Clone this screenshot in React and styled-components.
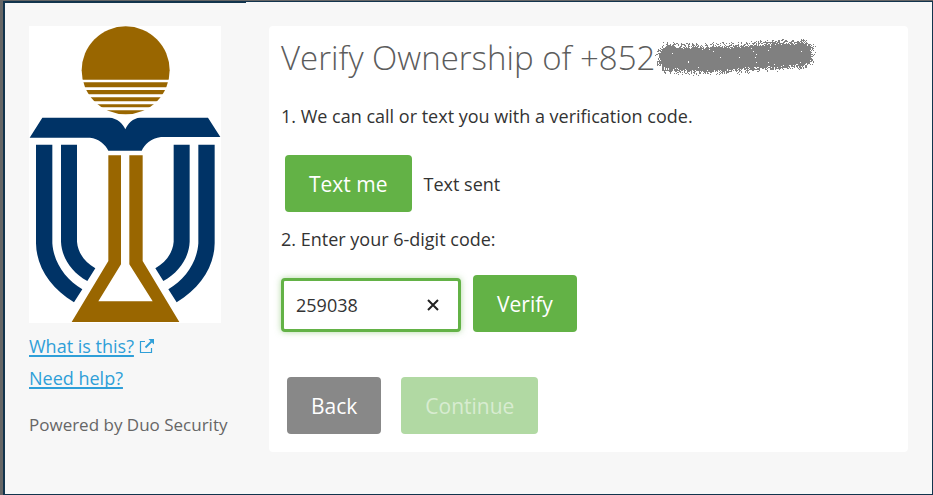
import React, { useState } from 'react'
import styled, { createGlobalStyle } from 'styled-components'

const GlobalStyle = createGlobalStyle`
    * {
        box-sizing: border-box;
    }

    body {
        margin: 0;
        background: #666666;
        color: #333333;
        font-family: "Open Sans", "Noto Sans", sans-serif;
        font-size: 18px;
        line-height: 24px;
    }
`

const Frame = styled.div`
    display: flex;
    flex-direction: column;
    min-height: calc(100vh - 1px);
    margin: 1px 0 0 3px;
    border: 1px solid #12344d;
    border-left-width: 2px;
    background: #f7f7f7;
`

const Progress = styled.div`
    width: 26%;
    height: 1px;
    background: #12344d;
`

const Layout = styled.div`
    display: flex;
    align-items: flex-start;
    gap: 48px;
    padding: 23px 24px;
`

const Sidebar = styled.aside`
    flex: 0 0 192px;
    min-width: 0;
`

const Logo = styled.svg`
    display: block;
    width: 100%;
    background: #ffffff;
`

const LinkList = styled.nav`
    display: flex;
    flex-direction: column;
    align-items: flex-start;
    margin: 7px 0 19px;
    line-height: 32px;
`

const HelpLink = styled.a`
    display: inline-flex;
    align-items: center;
    gap: 5px;
    color: #2f9fd8;
    text-decoration: none;

    span {
        text-decoration: underline 2px;
        text-underline-offset: 2px;
        text-decoration-skip-ink: none;
    }
`

const Powered = styled.p`
    margin: 0;
    color: #666666;
    font-size: 17px;
    white-space: nowrap;
`

const Card = styled.main`
    flex: 1;
    min-width: 0;
    padding: 12px 12px 18px;
    border-radius: 4px;
    background: #ffffff;
`

const Title = styled.h1`
    display: flex;
    align-items: center;
    margin: 0 0 26px;
    color: #5c5c5c;
    font-size: 33px;
    font-weight: 350;
    line-height: 40px;
    white-space: nowrap;
`

const Step = styled.p`
    margin: 0;
`

const Row = styled.div`
    display: flex;
    align-items: ${props => props.$align || 'center'};
    gap: ${props => props.$gap || '12px'};
    margin-top: ${props => props.$top};
    padding-left: ${props => props.$indent || '0'};
`

const Button = styled.button`
    height: 57px;
    padding: 0 24px;
    border: 0;
    border-radius: 4px;
    background: ${props => (props.$secondary ? '#888888' : '#63b246')};
    color: #ffffff;
    font: inherit;
    font-size: 21px;
    cursor: pointer;

    &:disabled {
        background: #b1d9a3;
        color: #d8ecd1;
        cursor: default;
    }
`

const CodeField = styled.div`
    display: flex;
    align-items: center;
    width: 180px;
    height: 54px;
    padding: 0 17px 0 12px;
    border: 3px solid #63b246;
    border-radius: 4px;
    background: #ffffff;
    box-shadow: 0 0 6px rgba(99, 178, 70, 0.5);
`

const CodeInput = styled.input`
    flex: 1;
    min-width: 0;
    padding: 0;
    border: 0;
    outline: 0;
    background: none;
    color: #333333;
    font: inherit;
`

const ClearButton = styled.button`
    display: flex;
    padding: 0;
    border: 0;
    background: none;
    color: #222222;
    cursor: pointer;
`

const NAVY = '#003366'
const GOLD = '#996600'

const Crest = () => (
    <Logo viewBox="0 0 576 891" role="img" aria-label="University crest">
        <circle cx="290" cy="133" r="132" fill={GOLD} />
        <path
            d="M150 161H430V169H150Z M150 184H430V192H150Z M150 205H430V214H150Z M150 226H430V235H150Z M150 244H430V253H150Z"
            fill="#ffffff"
        />
        <path
            d="M40 275H241C264 276 282 293 289 310C296 293 312 276 333 275H537L574 333H396C366 336 346 356 338 374H238C230 356 208 337 183 335H2Z"
            fill={NAVY}
        />
        <path id="pages" d="M21 356H70V652C74 710 110 760 160 790L135 829C64 786 22 722 21 652Z M96 356H144V647C147 682 168 709 199 727L175 765C126 738 98 694 96 647Z" fill={NAVY} />
        <use href="#pages" transform="translate(578 0) scale(-1 1)" />
        <path
            d="M238 388H276V715L208 826H371L301 715V388H341V705L451 888H128L238 705Z"
            fill={GOLD}
        />
    </Logo>
)

const ExternalIcon = () => (
    <svg width="15" height="15" viewBox="0 0 15 15" fill="none" stroke="currentColor" aria-hidden="true">
        <path d="M6 2.5H1.5V13.5H12.5V9" strokeWidth="1.2" />
        <path d="M6.5 8.5L12.5 2.5" strokeWidth="1.8" />
        <path d="M9.5 0H15V5.5Z" fill="currentColor" stroke="none" />
    </svg>
)

//spray the cells of the brush stroke, thinning out towards the edge
const sprayPath = (width, height) => {
    let seed = 7
    const random = () => {
        seed = (seed * 16807) % 2147483647
        return seed / 2147483647
    }
    let d = ''
    for (let x = 0; x < width; x++) {
        const t = x / width
        const middle = 18 + 2 * Math.sin(t * 5) - 2 * t * t
        const end = Math.min(x, width - 1 - x)
        const half = 17 * Math.sqrt(Math.min(1, (end + 3) / 14)) + 2 * (random() - 0.5)
        for (let y = 0; y < height; y++) {
            const depth = Math.min(half - Math.abs(y - middle), end + 1)
            const chance = depth > 7 ? 0.993 : Math.pow(Math.max(depth, 0) / 7, 1.3)
            if (random() < chance) {
                d += `M${x} ${y}h1v1h-1z`
            }
        }
    }
    return d
}

const stroke = sprayPath(161, 38)

const Redaction = () => (
    <svg width="161" height="38" viewBox="0 0 161 38" shapeRendering="crispEdges" role="img" aria-label="Hidden digits">
        <path d={stroke} fill="#808080" />
    </svg>
)

//two step phone verification: send the code, then check it
const App = () => {
    const [code, setCode] = useState('259038')

    return (
        <>
            <GlobalStyle />
            <Frame>
                <Progress />
                <Layout>
                    <Sidebar>
                        <Crest />
                        <LinkList>
                            <HelpLink href="#what">
                                <span>What is this?</span>
                                <ExternalIcon />
                            </HelpLink>
                            <HelpLink href="#help">
                                <span>Need help?</span>
                            </HelpLink>
                        </LinkList>
                        <Powered>Powered by Duo Security</Powered>
                    </Sidebar>
                    <Card>
                        <Title>
                            Verify Ownership of +852
                            <Redaction />
                        </Title>
                        <Step>1. We can call or text you with a verification code.</Step>
                        <Row $top="27px" $indent="4px">
                            <Button type="button">Text me</Button>
                            <span>Text sent</span>
                        </Row>
                        <Row $top="15px">
                            <label htmlFor="code">2. Enter your 6-digit code:</label>
                        </Row>
                        <Row $top="24px" $align="flex-end">
                            <CodeField>
                                <CodeInput
                                    id="code"
                                    type="text"
                                    inputMode="numeric"
                                    value={code}
                                    onChange={event => setCode(event.target.value)}
                                />
                                <ClearButton type="button" aria-label="Clear" onClick={() => setCode('')}>
                                    <svg width="16" height="16" viewBox="0 0 16 16" stroke="currentColor" strokeWidth="2">
                                        <path d="M3 3L13 13M13 3L3 13" />
                                    </svg>
                                </ClearButton>
                            </CodeField>
                            <Button type="button">Verify</Button>
                        </Row>
                        <Row $top="45px" $indent="6px" $gap="20px">
                            <Button type="button" $secondary>Back</Button>
                            <Button type="button" disabled>Continue</Button>
                        </Row>
                    </Card>
                </Layout>
            </Frame>
        </>
    )
}

export default App
